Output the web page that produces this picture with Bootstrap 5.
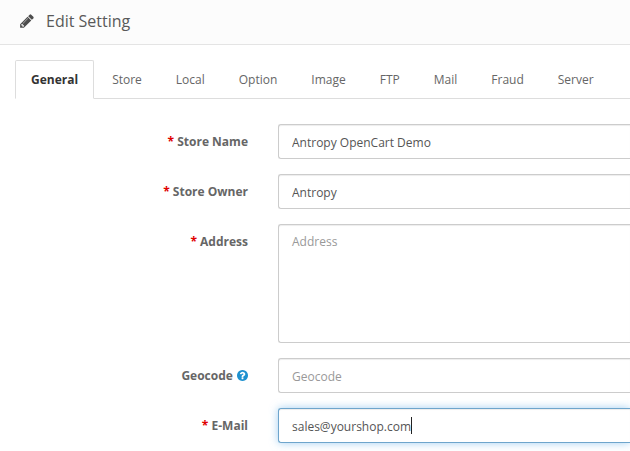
<!DOCTYPE html>
<html lang="en">
<head>
<meta charset="utf-8">
<meta name="viewport" content="width=device-width, initial-scale=1">
<title>Edit Setting</title>
<link href="https://cdn.jsdelivr.net/npm/bootstrap@5.3.0/dist/css/bootstrap.min.css" rel="stylesheet">
<style>
body { font-family: "Open Sans", sans-serif; font-size: 12px; line-height: 20px; color: #666; background: #fff; }
.panel-top { background: #fcfcfc; border-bottom: 1px solid #e4e4e4; padding: 10px 19px 12px; }
.panel-top h1 { font-size: 16px; line-height: 22px; color: #595959; }
.panel-top svg { width: 16px; height: 16px; margin-right: 11px; }
.panel-main { padding: 15px 0 8px 15px; }
.setting-tabs { --bs-nav-tabs-border-color: #ddd; --bs-nav-tabs-border-radius: 2px; gap: 2px; margin-bottom: 25px; }
.setting-tabs .nav-link { padding: 9px 15px 8px; font-size: 12px; line-height: 20px; color: #666; }
.setting-tabs .nav-link.active { font-weight: 700; color: #333; border-color: #ddd #ddd #fff; }
.setting-row { margin-bottom: 15px; }
.setting-label { width: 233px; margin-right: 30px; padding-top: 8px; font-weight: 700; text-align: right; }
.star { color: #e00000; }
.help-icon { width: 11px; height: 11px; margin-left: 1px; vertical-align: -1px; fill: #1e91cf; }
.setting-input.form-control { font-size: 12px; line-height: 20px; height: 35px; padding: 7px 13px 6px; color: #555; border-color: #ccc; border-right: 0; border-radius: 3px 0 0 3px; box-shadow: inset 0 1px 1px rgba(0,0,0,.075); }
.setting-input.form-control::placeholder { color: #999; }
textarea.setting-input.form-control { height: 119px; resize: none; }
.setting-input.form-control.is-current { border-color: #6ea5cc; box-shadow: inset 0 1px 1px rgba(0,0,0,.075), 0 0 8px rgba(102,175,233,.6); caret-color: transparent; outline: 0; }
.text-caret { left: 133px; top: 9px; width: 1px; height: 17px; background: #222; }
</style>
</head>
<body>
<header class="panel-top">
  <h1 class="d-flex align-items-center m-0 fw-normal">
    <svg viewBox="0 0 1792 1792" fill="#4c4c4c" aria-hidden="true"><path d="M491 1536l91-91-235-235-91 91v107h128v128h107zm523-928q0-22-22-22-10 0-17 7l-542 542q-7 7-7 17 0 22 22 22 10 0 17-7l542-542q7-7 7-17zm-54-192l416 416-832 832h-416v-416zm683 96q0 53-37 90l-166 166-416-416 166-165q36-38 90-38 53 0 91 38l235 234q37 39 37 91z"/></svg>
    Edit Setting
  </h1>
</header>
<main class="panel-main">
  <ul class="nav nav-tabs setting-tabs flex-nowrap">
    <li class="nav-item"><a class="nav-link active" aria-current="page" href="#general">General</a></li>
    <li class="nav-item"><a class="nav-link" href="#store">Store</a></li>
    <li class="nav-item"><a class="nav-link" href="#local">Local</a></li>
    <li class="nav-item"><a class="nav-link" href="#option">Option</a></li>
    <li class="nav-item"><a class="nav-link" href="#image">Image</a></li>
    <li class="nav-item"><a class="nav-link" href="#ftp">FTP</a></li>
    <li class="nav-item"><a class="nav-link" href="#mail">Mail</a></li>
    <li class="nav-item"><a class="nav-link" href="#fraud">Fraud</a></li>
    <li class="nav-item"><a class="nav-link" href="#server">Server</a></li>
  </ul>
  <form id="general">
    <div class="setting-row d-flex">
      <label class="setting-label flex-shrink-0" for="store-name"><span class="star">*</span> Store Name</label>
      <input class="form-control setting-input" id="store-name" type="text" value="Antropy OpenCart Demo">
    </div>
    <div class="setting-row d-flex">
      <label class="setting-label flex-shrink-0" for="store-owner"><span class="star">*</span> Store Owner</label>
      <input class="form-control setting-input" id="store-owner" type="text" value="Antropy">
    </div>
    <div class="setting-row d-flex">
      <label class="setting-label flex-shrink-0" for="address"><span class="star">*</span> Address</label>
      <textarea class="form-control setting-input" id="address" placeholder="Address"></textarea>
    </div>
    <div class="setting-row d-flex">
      <label class="setting-label flex-shrink-0" for="geocode">Geocode
        <svg class="help-icon" viewBox="128 128 1536 1536" aria-hidden="true"><path d="M1024 1376v-192q0-14-9-23t-23-9h-192q-14 0-23 9t-9 23v192q0 14 9 23t23 9h192q14 0 23-9t9-23zm256-672q0-88-55.5-163t-138.5-116-170-41q-243 0-371 213-15 24 8 42l132 100q7 6 19 6 16 0 25-12 53-68 86-92 34-24 86-24 48 0 85.5 26t37.5 59q0 38-20 61t-68 45q-63 28-115.5 86.5t-52.5 125.5v36q0 14 9 23t23 9h192q14 0 23-9t9-23q0-19 21.5-49.5t54.5-49.5q32-18 49-28.5t46-35 44.5-48 28-60.5 12.5-81zm384 192q0 209-103 385.5t-279.5 279.5-385.5 103-385.5-103-279.5-279.5-103-385.5 103-385.5 279.5-279.5 385.5-103 385.5 103 279.5 279.5 103 385.5z"/></svg></label>
      <input class="form-control setting-input" id="geocode" type="text" placeholder="Geocode">
    </div>
    <div class="d-flex">
      <label class="setting-label flex-shrink-0" for="email"><span class="star">*</span> E-Mail</label>
      <div class="position-relative flex-grow-1">
        <input class="form-control setting-input is-current" id="email" type="text" value="sales@yourshop.com">
        <span class="text-caret position-absolute" aria-hidden="true"></span>
      </div>
    </div>
  </form>
</main>
<script src="https://cdn.jsdelivr.net/npm/bootstrap@5.3.0/dist/js/bootstrap.bundle.min.js"></script>
</body>
</html>
